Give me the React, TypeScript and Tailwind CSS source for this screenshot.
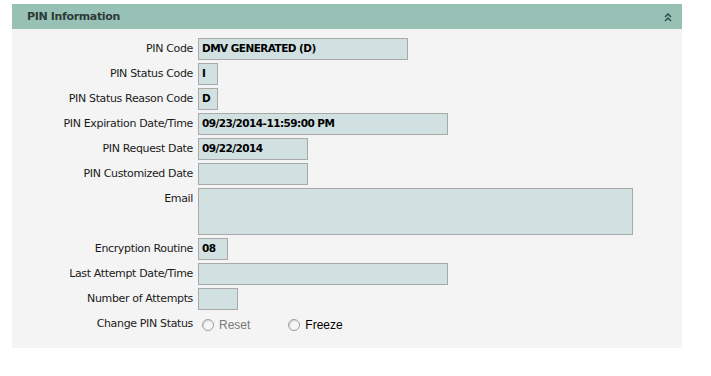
import React from "react";

type Row = {
    label: string;
    value?: string;
    w: string;
    tall?: boolean;
};

const rows: Row[] = [
    { label: "PIN Code", value: "DMV GENERATED (D)", w: "w-[210px]" },
    { label: "PIN Status Code", value: "I", w: "w-[20px]" },
    { label: "PIN Status Reason Code", value: "D", w: "w-[20px]" },
    { label: "PIN Expiration Date/Time", value: "09/23/2014-11:59:00 PM", w: "w-[250px]" },
    { label: "PIN Request Date", value: "09/22/2014", w: "w-[110px]" },
    { label: "PIN Customized Date", w: "w-[110px]" },
    { label: "Email", w: "w-[435px]", tall: true },
    { label: "Encryption Routine", value: "08", w: "w-[30px]" },
    { label: "Last Attempt Date/Time", w: "w-[250px]" },
    { label: "Number of Attempts", w: "w-[40px]" },
];

function Radio({ label, muted }: { label: string; muted?: boolean }) {
    return (
        <label className="flex items-center gap-[5px]">
            <span className="w-[12px] h-[12px] rounded-full border border-[#a0a0a0] bg-[#f6f6f6] shadow-[inset_1px_1px_1px_rgba(0,0,0,0.15)]" />
            <span
                className={`font-['Liberation_Sans',Arial,sans-serif] text-[12px] ${
                    muted ? "text-[#7a7a7a]" : "text-black"
                }`}
            >
                {label}
            </span>
        </label>
    );
}

export default function App() {
    return (
        <div className="min-h-screen bg-white pt-[4px] pl-[12px] font-['DejaVu_Sans',Verdana,sans-serif] text-[#222]">
            <div className="w-[670px]">
                {/* Header */}
                <div className="h-[25px] bg-[#97c1b5] flex items-center justify-between pl-[15px] pr-[10px]">
                    <span className="pt-[2px] text-[11px] font-bold text-[#2d3a36] tracking-[-0.35px]">
                        PIN Information
                    </span>
                    <svg width="8" height="9" viewBox="0 0 8 9" fill="none" stroke="#234a3c" strokeWidth="1.4" className="mt-[2px]">
                        <path d="M1 4 L4 1 L7 4" />
                        <path d="M1 8 L4 5 L7 8" />
                    </svg>
                </div>

                {/* Body */}
                <div className="bg-[#f4f4f4] pt-[9px] pb-[13px] flex flex-col gap-[3px]">
                    {rows.map(r => (
                        <div key={r.label} className="flex items-start gap-[5px]">
                            <div className="w-[181px] h-[22px] flex items-center justify-end text-[11px] tracking-[-0.35px] text-[#1a1a1a]">
                                {r.label}
                            </div>
                            <div
                                className={`${r.w} ${
                                    r.tall ? "h-[47px]" : "h-[22px]"
                                } border border-[#a9a9a9] bg-[#d1e0e0] flex items-center px-[3px] text-[10.5px] font-bold tracking-[-0.55px] text-black`}
                            >
                                {r.value}
                            </div>
                        </div>
                    ))}
                    <div className="flex items-center gap-[5px] h-[22px]">
                        <div className="w-[181px] text-right text-[11px] tracking-[-0.35px] text-[#1a1a1a]">
                            Change PIN Status
                        </div>
                        <div className="flex items-center gap-[38px] pl-[4px] pt-[2px]">
                            <Radio label="Reset" muted />
                            <Radio label="Freeze" />
                        </div>
                    </div>
                </div>
            </div>
        </div>
    );
}
